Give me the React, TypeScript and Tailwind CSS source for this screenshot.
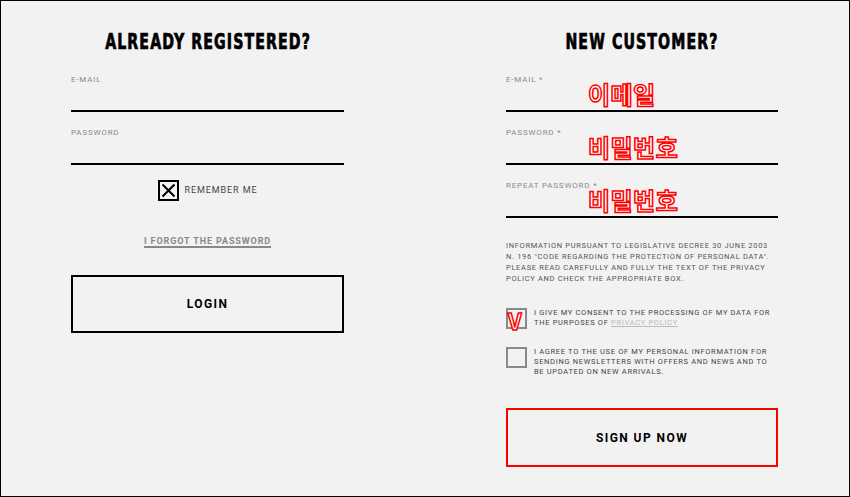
import React from 'react';

const korean =
  "absolute font-['Noto_Sans_CJK_KR',sans-serif] font-bold text-white [-webkit-text-stroke:1.5px_#ff0000] leading-none";

const heading =
  "text-center whitespace-nowrap font-['DejaVu_Sans_Condensed',sans-serif] font-bold text-[21px] leading-[24px] tracking-[0.07em] scale-x-[0.75] [-webkit-text-stroke:0.7px_black] mb-[21px]";

const small = 'whitespace-nowrap text-[7.5px] tracking-[0.09em]';

function Field({ label, note }: { label: string; note?: string }) {
  return (
    <div className="relative mb-[16px]">
      <p className="text-[8px] leading-[10px] tracking-[0.1em] text-[#8a8a8a]">{label}</p>
      <div className="h-[27px] border-b-2 border-black" />
      {note && <span className={`${korean} left-[82px] top-[7px] text-[24px] tracking-[0.02em]`}>{note}</span>}
    </div>
  );
}

export default function App() {
  return (
    <div className="w-[850px] h-[497px] border border-black bg-[#f2f2f2] font-['Roboto',sans-serif] text-black flex pl-[70px] pr-[71px]">
      <div className="w-[273px] pt-[29px]">
        <h1 className={heading}>ALREADY REGISTERED?</h1>
        <Field label="E-MAIL" />
        <Field label="PASSWORD" />
        <div className="flex items-center justify-center gap-[6px] -mt-[1px]">
          <div className="w-[21px] h-[21px] border-2 border-black flex items-center justify-center">
            <svg width="15" height="15" viewBox="0 0 15 15">
              <path d="M1.5 1.5 L13.5 13.5 M13.5 1.5 L1.5 13.5" stroke="black" strokeWidth="2" />
            </svg>
          </div>
          <span className="text-[9px] tracking-[0.1em] text-[#444]">REMEMBER ME</span>
        </div>
        <div className="text-center mt-[26px]">
          <span className="text-[9px] font-bold tracking-[0.1em] text-[#888] underline underline-offset-[2px] decoration-[1.5px]">
            I FORGOT THE PASSWORD
          </span>
        </div>
        <button className="mt-[24px] w-full h-[58px] border-2 border-black text-[12px] font-bold tracking-[0.12em]">
          LOGIN
        </button>
      </div>

      <div className="w-[272px] ml-auto pt-[29px]">
        <h1 className={heading}>NEW CUSTOMER?</h1>
        <Field label="E-MAIL *" note="이메일" />
        <Field label="PASSWORD *" note="비밀번호" />
        <Field label="REPEAT PASSWORD *" note="비밀번호" />
        <p className={`${small} mt-[22px] leading-[11px] tracking-[0.1em] text-[#555]`}>
          INFORMATION PURSUANT TO LEGISLATIVE DECREE 30 JUNE 2003<br />
          N. 196 "CODE REGARDING THE PROTECTION OF PERSONAL DATA".<br />
          PLEASE READ CAREFULLY AND FULLY THE TEXT OF THE PRIVACY<br />
          POLICY AND CHECK THE APPROPRIATE BOX.
        </p>
        <div className="flex gap-[7px] mt-[24px]">
          <div className="relative w-[21px] h-[21px] shrink-0 border-2 border-[#8a8a8a]">
            <span className={`${korean} left-[0px] -top-[1px] text-[22px] font-['Liberation_Sans',sans-serif]`}>V</span>
          </div>
          <p className={`${small} leading-[10px] text-[#444]`}>
            I GIVE MY CONSENT TO THE PROCESSING OF MY DATA FOR<br />
            THE PURPOSES OF <span className="text-[#bbb] underline">PRIVACY POLICY</span>
          </p>
        </div>
        <div className="flex gap-[7px] mt-[18px]">
          <div className="w-[21px] h-[21px] shrink-0 border-2 border-[#8a8a8a]" />
          <p className={`${small} leading-[10px] text-[#444]`}>
            I AGREE TO THE USE OF MY PERSONAL INFORMATION FOR<br />
            SENDING NEWSLETTERS WITH OFFERS AND NEWS AND TO<br />
            BE UPDATED ON NEW ARRIVALS.
          </p>
        </div>
        <button className="mt-[31px] w-full h-[59px] border-2 border-[#ff0000] text-[12px] font-bold tracking-[0.12em]">
          SIGN UP NOW
        </button>
      </div>
    </div>
  );
}
